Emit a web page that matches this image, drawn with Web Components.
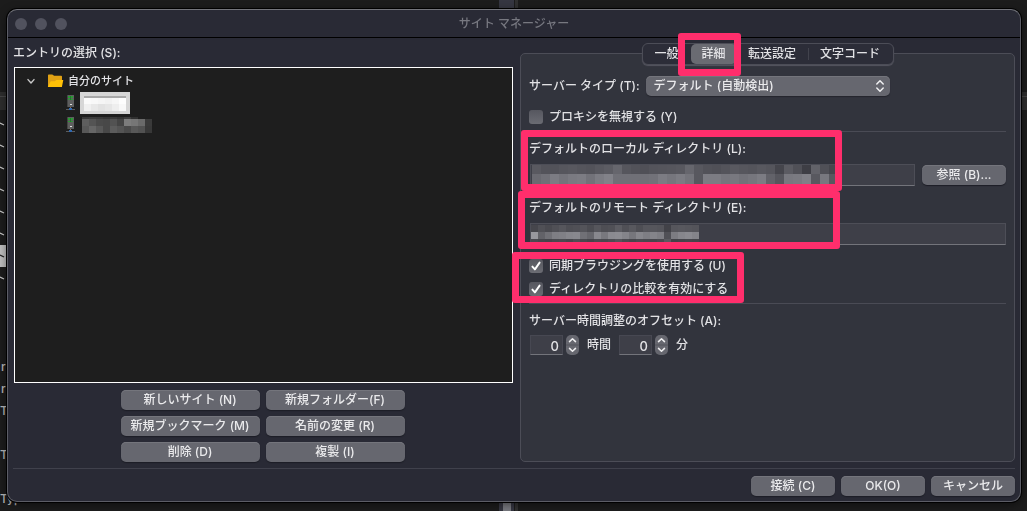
<!DOCTYPE html>
<html lang="ja">
<head>
<meta charset="utf-8">
<meta name="viewport" content="width=device-width, initial-scale=1">
<title>サイト マネージャー</title>
<style>
  html, body { margin: 0; min-height: 100%; }
  body {
    background: #1c1c1c;
    color: #e2e2e5;
    font: 500 12px/16px Inter, "Noto Sans CJK JP", sans-serif;
  }
</style>
</head>
<body>
<site-manager></site-manager>
<script>
const define = (name, html, setup) => {
  const tpl = document.createElement('template');
  tpl.innerHTML = html;
  customElements.define(name, class extends HTMLElement {
    constructor() {
      super();
      this.attachShadow({ mode: 'open' }).append(tpl.content.cloneNode(true));
    }
    connectedCallback() {
      if (setup && !this.ready) { this.ready = true; setup(this, this.shadowRoot); }
    }
  });
};

/* Push button */
define('push-button', `
<style>
  :host { display: block; width: 84px; }
  button {
    display: block; box-sizing: border-box; width: 100%; height: 20px; margin: 0; padding: 0 0 1px;
    border: 0; border-radius: 5px; background: #66676f; color: #eaeaec; font: inherit; line-height: 19px;
    white-space: nowrap; box-shadow: inset 0 1px #74757c, 0 1px 1px #1c1d26;
  }
</style>
<button type="button"><slot></slot></button>`);

/* Highlight frame laid over whatever it surrounds */
define('mark-frame', `
<style>
  :host {
    position: absolute; z-index: 2; inset: var(--inset, -7px); box-sizing: border-box;
    border: 7px solid #ff2e6c; border-radius: 3px; pointer-events: none;
  }
</style>`);

/* Redacted text: rows of grey cells, one hex byte per cell */
define('redacted-text', `
<style>:host { display: block; } svg { display: block; }</style>
<svg aria-hidden="true" shape-rendering="crispEdges"></svg>`, (host, root) => {
  const cell = +host.getAttribute('cell');
  const heights = host.getAttribute('heights').split(' ').map(Number);
  const tint = +(host.getAttribute('tint') || 0);
  const rows = host.textContent.trim().split(/\s*\/\s*/).map(r => r.split(/\s+/));
  host.textContent = '';
  let y = 0, out = '';
  rows.forEach((row, i) => {
    row.forEach((v, x) => {
      if (v === '--') return;
      const g = parseInt(v, 16);
      out += `<rect x="${x * cell}" y="${y}" width="${cell}" height="${heights[i]}" fill="rgb(${g},${g},${Math.min(255, g + tint)})"/>`;
    });
    y += heights[i];
  });
  const svg = root.querySelector('svg');
  svg.setAttribute('width', Math.max(...rows.map(r => r.length)) * cell);
  svg.setAttribute('height', y);
  svg.innerHTML = out;
});

/* Tick box with its label */
define('tick-box', `
<style>
  :host { display: block; }
  label { display: flex; align-items: center; gap: 6px; height: 16px; }
  span { display: grid; }
  input, svg { grid-area: 1 / 1; width: 14px; height: 14px; margin: 0; }
  input { appearance: none; border-radius: 3px; background: linear-gradient(#56575f, #6b6c73); }
  svg { visibility: hidden; pointer-events: none; }
  input:checked + svg { visibility: visible; }
</style>
<label><span><input type="checkbox"><svg viewBox="0 0 14 14"><path d="M3.4 7.6 5.9 10.4 10.6 3.6" fill="none" stroke="#fff" stroke-width="1.9" stroke-linecap="round" stroke-linejoin="round"/></svg></span><slot></slot></label>`,
(host, root) => { root.querySelector('input').checked = host.hasAttribute('checked'); });

/* Text box under its label; the slot holds what covers the value */
define('text-field', `
<style>
  :host { display: block; }
  label { display: block; height: 16px; }
  .row { display: flex; align-items: center; gap: 7px; margin: 7px 0 0 1px; }
  .box { position: relative; flex: 1; }
  input {
    display: block; box-sizing: border-box; width: 100%; height: 22px; margin: 0; padding: 0 4px;
    border: 1px solid #4d4e57; border-bottom-color: #73747b; border-radius: 0; background: #3e3f48; color: inherit; font: inherit;
  }
  ::slotted([slot=cover]) { position: absolute; left: var(--cover-x, 2px); top: var(--cover-y, 1px); }
</style>
<label for="f"><slot name="label"></slot></label>
<div class="row"><div class="box"><input id="f" type="text"><slot name="cover"></slot></div><slot name="action"></slot></div>`);

/* Number box with stepper and unit */
define('number-stepper', `
<style>
  :host, label { display: flex; align-items: center; }
  input {
    appearance: textfield; box-sizing: border-box; width: 33px; height: 20px; margin: 0 3px 0 0; padding: 2px 3px 0;
    border: 1px solid #474852; border-bottom-color: #73747b; background: #3e3f48; color: inherit;
    font: inherit; font-size: 13px; text-align: right;
  }
  input::-webkit-inner-spin-button { appearance: none; }
  svg { display: block; width: 13px; height: 20px; margin-right: 8px; }
</style>
<label><input type="number" value="0"><svg viewBox="0 0 13 20" aria-hidden="true"><rect width="13" height="20" rx="5" fill="#66676f"/><path d="M0 10h13" stroke="#53545c"/><path d="M3.5 6.6 6.5 3.8l3 2.8M3.5 13.4l3 2.8 3-2.8" fill="none" stroke="#f0f0f2" stroke-width="1.5" stroke-linecap="round" stroke-linejoin="round"/></svg><slot></slot></label>`);

/* Labelled drop-down */
define('drop-down', `
<style>
  :host { display: flex; align-items: center; gap: 6px; }
  div { display: grid; width: 244px; }
  select {
    grid-area: 1 / 1; appearance: none; box-sizing: border-box; width: 100%; height: 20px; margin: 0; padding: 0 24px 1px 8px; border: 0;
    border-radius: 5px; background: #66676f; color: #eaeaec; font: inherit; box-shadow: inset 0 1px #74757c, 0 1px 1px #24252d;
  }
  svg { grid-area: 1 / 1; justify-self: end; width: 20px; height: 20px; pointer-events: none; }
</style>
<label for="s"><slot></slot></label>
<div><select id="s"></select><svg viewBox="0 0 20 20" aria-hidden="true"><path d="M6.8 8 10 4.8 13.2 8M6.8 12l3.2 3.2 3.2-3.2" fill="none" stroke="#f0f0f2" stroke-width="1.5" stroke-linecap="round" stroke-linejoin="round"/></svg></div>`,
(host, root) => { root.querySelector('select').add(new Option(host.getAttribute('value'))); });

/* Tab strip */
define('tab-strip', `
<style>
  :host {
    display: grid; grid-template-columns: 48fr 46fr 71fr 85fr; box-sizing: border-box; width: 252px; height: 22px;
    border: 1px solid #4c4d57; border-radius: 6px; background: #2c2d38; box-shadow: 0 1px 1px #555660;
  }
  div { position: relative; display: flex; min-width: 0; }
  .line::before { content: ""; position: absolute; left: 0; top: 4px; height: 12px; border-left: 1px solid #42434d; }
  button { flex: 1; margin: 0; padding: 0 0 1px; border: 0; border-radius: 5px; background: none; color: inherit; font: inherit; white-space: nowrap; }
  button[aria-selected=true] { background: #6a6b72; }
  mark-frame { --inset: -11px -4px -12px -13px; }
</style>
<div><button type="button" role="tab" aria-selected="false">一般</button></div>
<div><button type="button" role="tab" aria-selected="true">詳細</button><mark-frame></mark-frame></div>
<div><button type="button" role="tab" aria-selected="false">転送設定</button></div>
<div class="line"><button type="button" role="tab" aria-selected="false">文字コード</button></div>`);

/* Server icon */
define('server-icon', `
<style>:host, svg { display: block; width: 9px; height: 16px; }</style>
<svg viewBox="0 0 9 16" aria-hidden="true"><path d="M1 0h7v12H1z" fill="#5e5e5e"/><path d="M1 0h1v12H1z" fill="#454545"/><path d="M2 1h5v2H2zM2 4h5v1H2z" fill="#2a9a34"/><path d="M4 1h1v4H4z" fill="#1f7a28"/><path d="M4 9h2v1H4z" fill="#ddd"/><path d="M4 12h1v2H4z" fill="#8a6a5a"/><path d="M0 14h9v1H0z" fill="#5c5c5c"/><path d="M3 13h3v2H3z" fill="#2f68b0"/></svg>`);

/* Site tree */
define('site-tree', `
<style>
  :host { display: block; box-sizing: border-box; border: 1px solid #fff; background: #1e1e1e; padding-top: 2px; font-size: 11px; }
  ul { list-style: none; margin: 0; padding: 0; }
  li > div { display: flex; align-items: center; height: 22px; }
  .root { padding-left: 11px; }
  .arrow { width: 10px; height: 10px; margin-right: 11px; }
  .folder { width: 17px; height: 14px; margin-right: 4px; }
  .site { padding-left: 51px; gap: 5px; }
  .edit { display: block; box-sizing: border-box; width: 50px; height: 22px; background: #d6d6d6; padding: 4px; }
  .name { margin-left: 2px; }
</style>
<ul>
  <li>
    <div class="root">
      <svg class="arrow" viewBox="0 0 10 10"><path d="M2 3.6 5 7l3-3.4" fill="none" stroke="#c8c8c8" stroke-width="1.4" stroke-linecap="round" stroke-linejoin="round"/></svg>
      <svg class="folder" viewBox="0 0 17 14"><path d="M1 1.2Q1 .5 1.7.5h3.6l1.8 1.2h7q.9 0 .9.9V13H1z" fill="#e0a114"/><path d="M3.8 7.2h4l1.5-1.1h7L14.9 13H.8z" fill="#ffc107"/></svg>
      自分のサイト
    </div>
    <ul>
      <li><div class="site"><server-icon></server-icon><span class="edit"><redacted-text cell="7" heights="2 6 7">a8 a8 a8 a8 a8 a8 / fa f8 f5 f2 f6 fd / f0 e8 e2 e6 ee f8</redacted-text></span></div></li>
      <li><div class="site"><server-icon></server-icon><redacted-text class="name" cell="7" heights="2 7 7">38 3c 3a 36 3a 34 3e 30 -- -- / 5e 54 4a 48 52 44 7c 76 6a 3a / 58 66 58 48 5c 54 4a 58 52 38</redacted-text></div></li>
    </ul>
  </li>
</ul>`);

/* Slice of the file manager visible around the dialog */
define('desktop-backdrop', `
<style>
  :host { display: block; position: fixed; inset: 0; overflow: hidden; background: #1c1c1c; color: #c9c9c9; }
  svg { position: absolute; left: 0; top: 0; width: 100%; height: 100%; }
  text { font: 500 12px Inter, sans-serif; fill: #b4b4b4; }
</style>
<svg aria-hidden="true" shape-rendering="crispEdges">
  <path d="M499 0h15v511h-15z" fill="#353641"/><path d="M515 0h3v511h-3z" fill="#303030"/>
  <path d="M503 502h8v9h-8z" fill="#77787e"/>
  <path d="M0 92h7v18H0zM1021 92h6v18h-6z" fill="#2d2d2d"/><path d="M0 96h7M1021 96h6" stroke="#454545"/>
  <path d="M0 245h7v22H0z" fill="#bdbdbd"/>
  <g fill="none" stroke="#c8c8c8" stroke-width="1.3" shape-rendering="auto">
    <path d="M0 123l4 2M0 145l4 2M0 167l4 2M0 189l4 2M0 211l4 2M0 233l4 2M0 277l4 2"/><path d="M0 255l4 2" stroke="#222"/>
  </g>
  <text x="1" y="371">r</text><text x="1" y="393">r</text><text x="0" y="415">T</text><text x="0" y="459">T</text><text x="0" y="503">Type</text>
</svg>`);

/* Window chrome */
define('app-window', `
<style>
  :host {
    position: relative; display: flex; flex-direction: column; flex: 1; box-sizing: border-box; min-width: 0;
    border: 1px solid #5c5d66; border-top-color: #73747b; border-radius: 10px; background: #292a35; box-shadow: 0 0 0 1px #000, 0 2px 8px #0008;
  }
  header { display: grid; grid-template-columns: 1fr auto 1fr; align-items: center; height: 27px; border-bottom: 1px solid #000; color: #777880; padding: 0 7px; }
  .lights { display: flex; gap: 8px; }
  i { width: 12px; height: 12px; border-radius: 50%; background: #51525e; }
  h1 { margin: 0; font: inherit; }
  main { display: flex; flex-direction: column; flex: 1; padding: 0 5px; }
</style>
<header><div class="lights"><i></i><i></i><i></i></div><h1><slot name="title"></slot></h1></header>
<main><slot></slot></main>`);

/* The dialog */
define('site-manager', `
<style>
  :host { display: flex; box-sizing: border-box; min-height: 100vh; padding: 9px 6px 9px 7px; }
  .cols { display: flex; gap: 6px; flex: 1; }
  .left { flex: 1 1 501px; display: flex; flex-direction: column; padding-top: 7px; }
  site-tree { flex: 1; min-height: 160px; margin: 6px 1px 0; }
  .actions { display: grid; grid-template-columns: 139px 139px; justify-content: center; gap: 6px; margin: 7px 2px 0 0; }
  .actions push-button { width: auto; }
  .right { flex: 1 1 495px; display: flex; flex-direction: column; align-items: center; padding-top: 5px; }
  .panel {
    flex: 1; align-self: stretch; box-sizing: border-box; margin-top: -12px; padding: 22px 8px 8px;
    border: 1px solid #4c4d57; border-radius: 5px; background: #32343d;
  }
  tab-strip { position: relative; z-index: 1; }
  .group { position: relative; }
  hr { margin: 0; border: 0; border-top: 1px solid #4a4b55; }
  .proxy { margin: 13px 0 6px; }
  .local { margin-top: 9px; }
  .local mark-frame { --inset: -11px 164px -5px -8px; }
  .remote { margin: 14px 0 13px; --cover-x: 1px; --cover-y: 2px; }
  .remote mark-frame { --inset: -9px 166px -4px -11px; }
  .sync { display: grid; gap: 7px; margin-bottom: 6px; }
  .sync mark-frame { --inset: -6px auto -6px -17px; width: 232px; }
  .offset { margin: 9px 0 6px; }
  .time { display: flex; gap: 8px; margin-left: 1px; }
  footer { display: flex; justify-content: flex-end; gap: 6px; margin-top: 6px; padding: 7px 0 5px; border-top: 1px solid #40414c; }
</style>
<desktop-backdrop></desktop-backdrop>
<app-window>
  <span slot="title">サイト マネージャー</span>
  <div class="cols">
    <section class="left">
      <div>エントリの選択 (S):</div>
      <site-tree></site-tree>
      <div class="actions">
        <push-button>新しいサイト (N)</push-button><push-button>新規フォルダー(F)</push-button>
        <push-button>新規ブックマーク (M)</push-button><push-button>名前の変更 (R)</push-button>
        <push-button>削除 (D)</push-button><push-button>複製 (I)</push-button>
      </div>
    </section>
    <section class="right">
      <tab-strip role="tablist"></tab-strip>
      <div class="panel">
        <drop-down value="デフォルト (自動検出)">サーバー タイプ (T):</drop-down>
        <tick-box class="proxy">プロキシを無視する (Y)</tick-box>
        <hr>
        <div class="group local">
          <text-field>
            <span slot="label">デフォルトのローカル ディレクトリ (L):</span>
            <redacted-text slot="cover" cell="9" heights="9 10" tint="7">59 53 52 56 58 55 53 58 5c 66 56 52 50 54 55 56 58 66 58 52 50 54 59 56 54 58 55 45 5b 50 3e 62 50 46 / 6a 70 7c 74 7a 7c 72 7c 82 70 70 70 70 72 7c 76 7c 74 58 7c 7c 76 78 72 76 7c 62 56 78 7a 80 58 78 58</redacted-text>
            <push-button slot="action">参照 (B)...</push-button>
          </text-field>
          <mark-frame></mark-frame>
        </div>
        <div class="group remote">
          <text-field>
            <span slot="label">デフォルトのリモート ディレクトリ (E):</span>
            <redacted-text slot="cover" cell="7" heights="7 7 4" tint="6">46 50 4a 50 56 4e 50 54 4c 56 4e 50 5c 50 58 4e 56 56 54 42 56 58 56 54 / 98 62 70 7e 80 86 88 70 66 88 78 8a 8c 84 76 86 7e 84 7e 50 7c 86 8a 84 / 4a 46 44 48 4a 46 4e 48 44 4a 48 4c 54 4a 46 4a 48 46 4a 5a 42 44 46 44</redacted-text>
          </text-field>
          <mark-frame></mark-frame>
        </div>
        <div class="group sync">
          <tick-box checked>同期ブラウジングを使用する (U)</tick-box>
          <tick-box checked>ディレクトリの比較を有効にする</tick-box>
          <mark-frame></mark-frame>
        </div>
        <hr>
        <div class="offset">サーバー時間調整のオフセット (A):</div>
        <div class="time"><number-stepper>時間</number-stepper><number-stepper>分</number-stepper></div>
      </div>
    </section>
  </div>
  <footer><push-button>接続 (C)</push-button><push-button>OK(O)</push-button><push-button>キャンセル</push-button></footer>
</app-window>`);
</script>
</body>
</html>
